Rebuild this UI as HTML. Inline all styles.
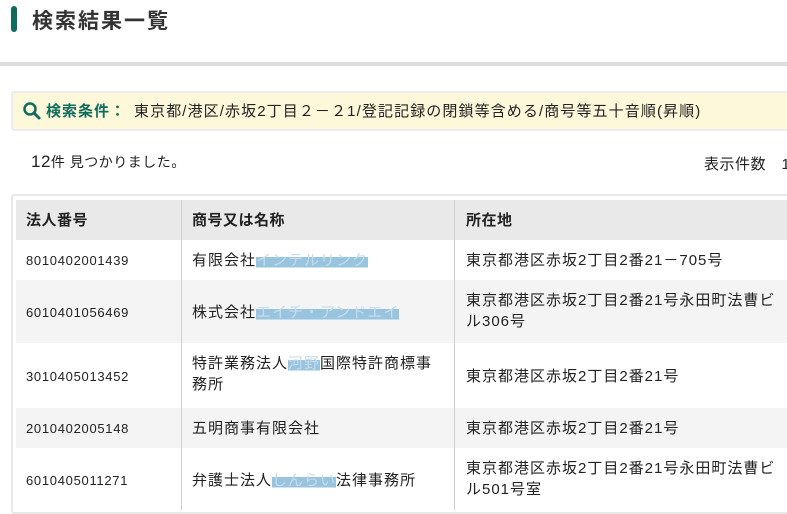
<!DOCTYPE html>
<html><head><meta charset="utf-8"><style>
*{margin:0;padding:0;box-sizing:border-box}
body{width:787px;height:501px;overflow:hidden;background:#fff;font-family:"Liberation Sans","Noto Sans CJK JP",sans-serif;color:#222;position:relative}
.a{position:absolute;white-space:nowrap}
.bar{left:11px;top:6px;width:6px;height:26px;background:#0f6b5c;border-radius:3px}
.title{left:32px;top:5px;font-size:21px;font-weight:bold;color:#333;letter-spacing:2px}
.hr{left:0;top:62px;width:787px;height:4px;background:#ddd}
.cond{left:11px;top:91px;width:790px;height:40px;background:#fdf8d9;border:2px solid #ececec;border-radius:3px}
.cl{left:46px;top:100px;font-size:15px;font-weight:bold;color:#0f6b5c;letter-spacing:1px}
.ct{left:134px;top:100px;font-size:15px;color:#222;letter-spacing:1.1px}
.cnt{left:31px;top:152px;font-size:14px;letter-spacing:0.5px}
.cnt b{font-size:17px;font-weight:normal}
.disp{left:704px;top:153px;font-size:15px;letter-spacing:0.5px}
.tbl{left:11px;top:194px;width:800px;height:320px;border:2px solid #e8e8e8;border-radius:3px}
.row{position:absolute;left:16px;width:780px}
.c{position:absolute;font-size:15px;line-height:21px;letter-spacing:1px}
.n{font-size:13px;letter-spacing:0.7px}
.vl{position:absolute;top:200px;width:1px;height:310px;background:#d0d0d0}
.bl{background:linear-gradient(to bottom,transparent 30%,#98c4df 30%,#98c4df 90%,transparent 90%);color:#c8dcea}
</style></head><body>
<div class="a bar"></div>
<div class="a title">検索結果一覧</div>
<div class="a hr"></div>
<div class="a cond"></div>
<svg class="a" style="left:22px;top:101px" width="20" height="20" viewBox="0 0 20 20"><circle cx="8" cy="8" r="5.5" fill="none" stroke="#0f6b5c" stroke-width="2.5"/><line x1="12" y1="12" x2="17" y2="17" stroke="#0f6b5c" stroke-width="3" stroke-linecap="round"/></svg>
<div class="a cl">検索条件：</div>
<div class="a ct">東京都/港区/赤坂2丁目２－２1/登記記録の閉鎖等含める/商号等五十音順(昇順)</div>
<div class="a cnt"><b>12</b>件 見つかりました。</div>
<div class="a disp">表示件数　1</div>
<div class="a tbl"></div>
<div class="row" style="top:200px;height:40px;background:#e9e9e9"></div>
<div class="row" style="top:240px;height:40px;background:#fff"></div>
<div class="row" style="top:280px;height:63px;background:#f4f4f4"></div>
<div class="row" style="top:343px;height:65px;background:#fff"></div>
<div class="row" style="top:408px;height:40px;background:#f4f4f4"></div>
<div class="row" style="top:448px;height:60px;background:#fff"></div>
<div class="vl" style="left:181px"></div>
<div class="vl" style="left:454px"></div>
<div class="c" style="left:26px;top:210px;font-weight:bold;font-size:15px;letter-spacing:0.5px">法人番号</div>
<div class="c" style="left:192px;top:210px;font-weight:bold;font-size:15px;letter-spacing:0.5px">商号又は名称</div>
<div class="c" style="left:466px;top:210px;font-weight:bold;font-size:15px;letter-spacing:0.5px">所在地</div>

<div class="c n" style="left:26px;top:250px">8010402001439</div>
<div class="c" style="left:192px;top:250px">有限会社<span class="bl">インテルリンク</span></div>
<div class="c" style="left:466px;top:250px">東京都港区赤坂2丁目2番21－705号</div>

<div class="c n" style="left:26px;top:302px">6010401056469</div>
<div class="c" style="left:192px;top:302px">株式会社<span class="bl">エイチ・アンドエイ</span></div>
<div class="c" style="left:466px;top:290px;white-space:normal;width:312px">東京都港区赤坂2丁目2番21号永田町法曹ビル306号</div>

<div class="c n" style="left:26px;top:366px">3010405013452</div>
<div class="c" style="left:192px;top:353px;white-space:normal;width:250px">特許業務法人<span class="bl">河野</span>国際特許商標事務所</div>
<div class="c" style="left:466px;top:366px">東京都港区赤坂2丁目2番21号</div>

<div class="c n" style="left:26px;top:418px">2010402005148</div>
<div class="c" style="left:192px;top:418px">五明商事有限会社</div>
<div class="c" style="left:466px;top:418px">東京都港区赤坂2丁目2番21号</div>

<div class="c n" style="left:26px;top:470px">6010405011271</div>
<div class="c" style="left:192px;top:470px">弁護士法人<span class="bl">しんらい</span>法律事務所</div>
<div class="c" style="left:466px;top:458px;white-space:normal;width:312px">東京都港区赤坂2丁目2番21号永田町法曹ビル501号室</div>
</body></html>
